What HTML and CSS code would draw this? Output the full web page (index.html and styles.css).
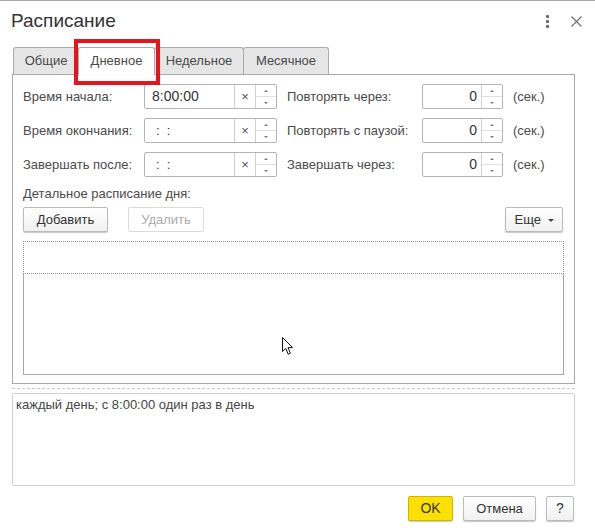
FILE: index.html
```html
<!DOCTYPE html>
<html>
<head>
<meta charset="UTF-8">
<title>Расписание</title>
<link rel="stylesheet" href="styles.css">
</head>
<body>
<div class="window">
  <div class="header">
    <div class="title">Расписание</div>
    <div class="kebab"><i></i><i></i><i></i></div>
    <svg class="close" width="11" height="11" viewBox="0 0 11 11"><path d="M0.5 0.5L10.5 10.5M10.5 0.5L0.5 10.5" stroke="#6a6a6a" stroke-width="1.1" fill="none"/></svg>
  </div>

  <div class="content">
    <div class="tabs">
      <div class="tab t1">Общие</div>
      <div class="tab t2 current">Дневное<span class="mark"></span></div>
      <div class="tab t3">Недельное</div>
      <div class="tab t4">Месячное</div>
    </div>

    <div class="panel">
      <div class="form">
        <div class="lbl">Время начала:</div>
        <div class="cell">
          <div class="field date">
            <div class="val">8:00:00</div>
            <div class="clr">×</div>
            <div class="spin"><span class="up"></span><span class="dn"></span></div>
          </div>
        </div>
        <div class="lbl">Повторять через:</div>
        <div class="cell">
          <div class="field num">
            <div class="val">0</div>
            <div class="spin"><span class="up"></span><span class="dn"></span></div>
          </div>
        </div>
        <div class="lbl">(сек.)</div>

        <div class="lbl">Время окончания:</div>
        <div class="cell">
          <div class="field date">
            <div class="val empty">:&nbsp;&nbsp;:</div>
            <div class="clr">×</div>
            <div class="spin"><span class="up"></span><span class="dn"></span></div>
          </div>
        </div>
        <div class="lbl">Повторять с паузой:</div>
        <div class="cell">
          <div class="field num">
            <div class="val">0</div>
            <div class="spin"><span class="up"></span><span class="dn"></span></div>
          </div>
        </div>
        <div class="lbl">(сек.)</div>

        <div class="lbl">Завершать после:</div>
        <div class="cell">
          <div class="field date">
            <div class="val empty">:&nbsp;&nbsp;:</div>
            <div class="clr">×</div>
            <div class="spin"><span class="up"></span><span class="dn"></span></div>
          </div>
        </div>
        <div class="lbl">Завершать через:</div>
        <div class="cell">
          <div class="field num">
            <div class="val">0</div>
            <div class="spin"><span class="up"></span><span class="dn"></span></div>
          </div>
        </div>
        <div class="lbl">(сек.)</div>
      </div>

      <div class="caption">Детальное расписание дня:</div>
      <div class="toolbar">
        <div class="btn add">Добавить</div>
        <div class="btn del disabled">Удалить</div>
        <div class="btn more">Еще <span class="caret"></span></div>
      </div>

      <div class="grid">
        <div class="grid-head"></div>
        <svg class="cursor" width="13" height="19" viewBox="0 0 13 19"><path d="M0.5 0.5V14.5L3.8 11.4L6.2 17.2L8.4 16.2L6 10.6H10.6Z" fill="#fff" stroke="#111" stroke-width="1" stroke-linejoin="round"/></svg>
      </div>
    </div>

    <div class="sep"></div>
    <div class="memo">каждый день; с 8:00:00 один раз в день</div>
  </div>

  <div class="footer">
    <div class="btn ok">OK</div>
    <div class="btn cancel">Отмена</div>
    <div class="btn help">?</div>
  </div>
</div>
</body>
</html>
```

FILE: styles.css
```css
*{margin:0;padding:0;box-sizing:border-box;}
body{background:#fff;font-family:"Liberation Sans",Arial,sans-serif;font-size:13px;color:#4a4a4a;}
.window{width:595px;height:532px;border-top:1px solid #a9a9a9;background:#fff;overflow:hidden;}

/* header */
.header{display:flex;align-items:flex-start;height:46px;padding:7px 13px 0 11px;}
.title{font-size:19px;line-height:26px;color:#333;}
.kebab{margin-left:auto;margin-top:7px;width:3px;display:flex;flex-direction:column;gap:2px;}
.kebab i{display:block;width:3px;height:3px;background:#666;border-radius:1px;}
.close{margin-left:22px;margin-top:8px;}

.content{padding:0 20px 0 12px;}

/* tabs */
.tabs{display:flex;align-items:flex-end;height:27px;padding-left:1px;}
.tab{height:27px;line-height:26px;text-align:center;border:1px solid #ababab;border-bottom:none;border-radius:3px 3px 0 0;background:#e6e6e6;color:#4a4a4a;margin-right:-1px;}
.t1{width:66px;}
.t2{width:77px;}
.t3{width:90px;}
.t4{width:86px;}
.tab.current{background:#fff;height:28px;margin-bottom:-1px;position:relative;z-index:1;}
.tab .mark{position:absolute;left:-5px;top:-9px;width:86px;height:46px;border:4px solid #e3161f;}

/* panel */
.panel{border:1px solid #a8a8a8;height:310px;padding:9px 10px 8px 10px;}
.form{display:grid;grid-template-columns:121px 143px 135px 91px auto;row-gap:9px;}
.lbl{height:25px;line-height:25px;white-space:nowrap;}
.cell{height:25px;}
.field{display:flex;height:25px;border:1px solid #b4b4b4;border-radius:2px;background:#fff;}
.field.date{width:133px;}
.field.num{width:81px;}
.field .val{flex:1;line-height:23px;color:#333;font-size:14px;}
.date .val{padding-left:7px;}
.date .val.empty{padding-left:11px;font-size:13px;}
.num .val{text-align:right;padding-right:4px;}
.clr{width:21px;border-left:1px solid #cfcfcf;text-align:center;line-height:23px;font-size:13px;color:#555;}
.spin{width:21px;border-left:1px solid #cfcfcf;display:flex;flex-direction:column;}
.spin span{flex:1;display:flex;align-items:center;justify-content:center;}
.spin .dn{border-top:1px solid #e0e0e0;}
.spin .up::after{content:"";border-left:2px solid transparent;border-right:2px solid transparent;border-bottom:2px solid #777;}
.spin .dn::after{content:"";border-left:2px solid transparent;border-right:2px solid transparent;border-top:2px solid #777;}

.caption{margin-top:9px;line-height:16px;}
.toolbar{display:flex;margin-top:5px;}

/* buttons */
.btn{height:25px;line-height:23px;border:1px solid #bababa;border-radius:2px;background:linear-gradient(#fff,#f1f1f1);box-shadow:0 1px 1px rgba(0,0,0,0.22);text-align:center;color:#333;font-size:13px;}
.add{width:85px;}
.del{width:76px;margin-left:20px;}
.btn.disabled{color:#aaa;border-color:#dcdcdc;box-shadow:none;background:#fff;}
.more{width:58px;margin-left:auto;margin-right:1px;}
.caret{display:inline-block;vertical-align:middle;margin-left:3px;border-left:3px solid transparent;border-right:3px solid transparent;border-top:3px solid #444;}

/* list */
.grid{position:relative;margin-top:9px;height:134px;border:1px solid #a6a6a6;}
.grid-head{height:33px;margin:-1px -1px 0 -1px;border:1px dotted #8e8e8e;background:#fff;}
.cursor{position:absolute;left:258px;top:95px;}

.sep{margin-top:4px;border-top:1px dashed #c9c9c9;}
.memo{margin-top:4px;height:93px;border:1px solid #d0d0d0;border-radius:2px;padding:3px 3px;line-height:16px;color:#444;}

/* footer */
.footer{display:flex;justify-content:flex-end;gap:10px;padding-right:21px;margin-top:10px;}
.ok{width:45px;background:#fbe000;border-color:#cdb500;font-size:14px;color:#333;}
.cancel{width:73px;}
.help{width:28px;font-size:14px;}
```
